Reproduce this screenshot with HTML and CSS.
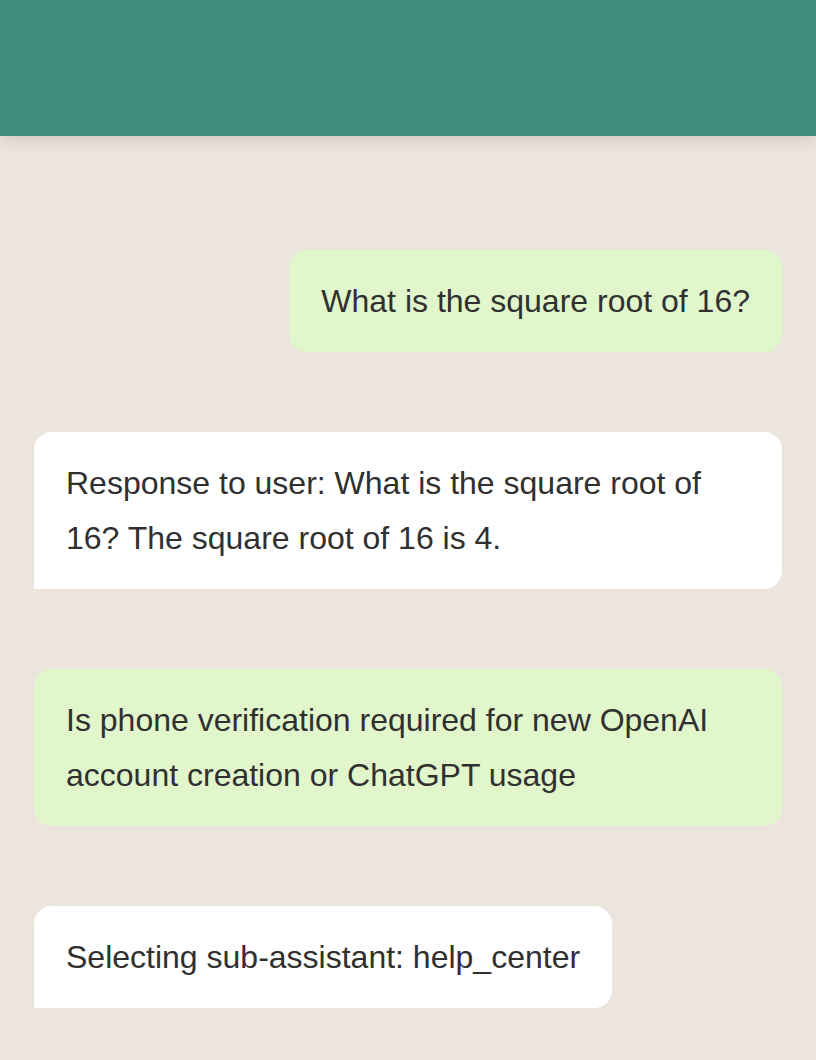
FILE: index.html
```html
<!DOCTYPE html>
<html>
<head>
<meta charset="utf-8">
<link rel="stylesheet" href="styles.css">
</head>
<body>
<header class="topbar"></header>
<main class="chat">
  <div class="msg msg-user">What is the square root of 16?</div>
  <div class="msg msg-bot">Response to user: What is the square root of 16? The square root of 16 is 4.</div>
  <div class="msg msg-user">Is phone verification required for new OpenAI account creation or ChatGPT usage</div>
  <div class="msg msg-bot">Selecting sub-assistant: help_center</div>
</main>
</body>
</html>
```
FILE: styles.css
```css
html, body {
  margin: 0;
  padding: 0;
}
body {
  background: #ece5de;
  font-family: "Liberation Sans", Arial, Helvetica, sans-serif;
  color: #303030;
  min-height: 1060px;
}
.topbar {
  height: 136px;
  background: #418b7d;
  box-shadow: 0 3px 16px rgba(0, 0, 0, 0.13);
  position: relative;
}
.chat {
  display: flex;
  flex-direction: column;
  gap: 80px;
  padding: 114px 34px 40px;
}
.msg {
  font-size: 32px;
  line-height: 1.7;
  padding: 24px 32px;
  border-radius: 18px;
  max-width: 100%;
  box-sizing: border-box;
}
.msg-user {
  align-self: flex-end;
  background: #e1f6cb;
}
.msg-bot {
  align-self: flex-start;
  background: #ffffff;
  border-bottom-left-radius: 0;
}
```
